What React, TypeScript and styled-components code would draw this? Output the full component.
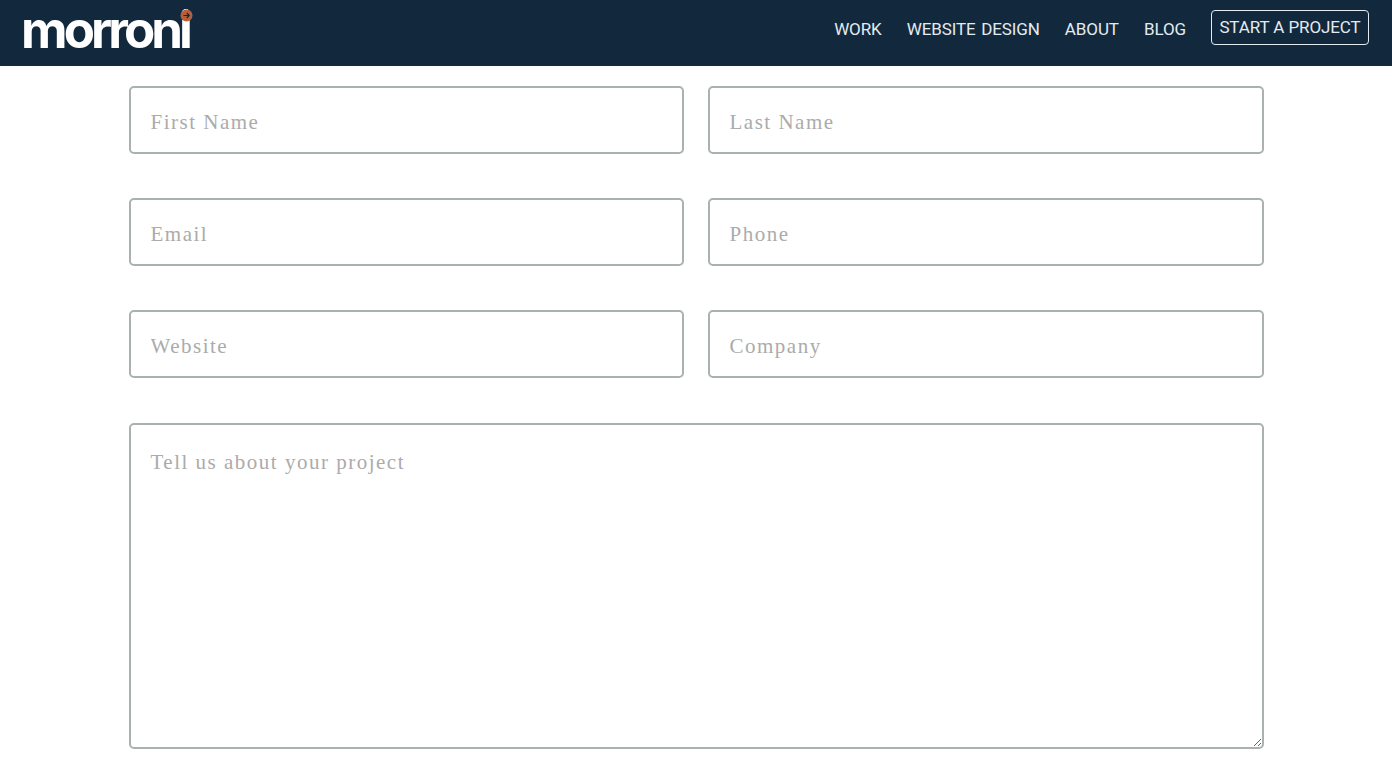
import React from 'react';
import styled, { createGlobalStyle } from 'styled-components';

const GlobalStyle = createGlobalStyle`
  html, body {
    margin: 0;
    padding: 0;
    height: 100%;
    overflow: hidden;
    background: #FFFFFF;
  }
  * {
    box-sizing: border-box;
  }
`;

const Header = styled.header`
  height: 66px;
  background: #12293D;
  display: flex;
  align-items: flex-start;
  justify-content: space-between;
  padding: 10px 23px 0 24px;
`;

const Logo = styled.div`
  position: relative;
  width: 168px;
  height: 40px;
  font-family: "Inter", sans-serif;
  font-weight: 700;
  font-size: 51px;
  line-height: 40px;
  letter-spacing: -3.9px;
  margin-left: -3px;
  color: #FFFFFF;
  white-space: nowrap;
`;

const LogoDot = styled.svg`
  position: absolute;
  top: -1px;
  right: -3.5px;
  width: 13px;
  height: 13px;
`;

const Nav = styled.nav`
  display: flex;
  align-items: flex-start;
  gap: 25px;
`;

const NavLink = styled.a`
  font-family: "Roboto", sans-serif;
  font-size: 17px;
  line-height: 20px;
  letter-spacing: -0.1px;
  word-spacing: 1.5px;
  color: #E4EBF0;
  margin-top: 9px;
  white-space: nowrap;
`;

const CtaButton = styled.a`
  width: 158px;
  height: 35px;
  border: 1px solid #E4EBF0;
  border-radius: 4px;
  font-family: "Roboto", sans-serif;
  font-size: 17px;
  line-height: 32px;
  letter-spacing: -0.1px;
  color: #E4EBF0;
  text-align: center;
  white-space: nowrap;
`;

const Form = styled.form`
  width: 1135px;
  margin: 20px 0 0 129px;
  display: grid;
  grid-template-columns: 555px 556px;
  column-gap: 24px;
  row-gap: 44px;
`;

const fieldStyles = `
  display: block;
  width: 100%;
  border: 2px solid #A9B2AE;
  border-radius: 5px;
  background: #FFFFFF;
  padding: 0 19.5px;
  font-family: "Liberation Serif", serif;
  font-size: 21px;
  letter-spacing: 1.5px;
  color: #333333;
  outline: none;
  &::placeholder {
    color: #ABABAB;
    opacity: 1;
  }
`;

const Input = styled.input`
  ${fieldStyles}
  height: 68px;
  padding-top: 5px;
`;

const TextArea = styled.textarea`
  ${fieldStyles}
  grid-column: 1 / -1;
  height: 326px;
  margin-top: 1px;
  padding-top: 25px;
`;

const fields = ['First Name', 'Last Name', 'Email', 'Phone', 'Website', 'Company'];
const links = ['WORK', 'WEBSITE DESIGN', 'ABOUT', 'BLOG'];

export default function App() {
  return (
    <>
      <GlobalStyle />
      <Header>
        <Logo>
          morroni
          <LogoDot viewBox="0 0 13 13">
            <circle cx="6.5" cy="6.5" r="6" fill="#B5603A" />
            <path d="M3.5 6.5h5.5M6.8 4l2.4 2.5L6.8 9" fill="none" stroke="#12293D" strokeWidth="1.2" />
          </LogoDot>
        </Logo>
        <Nav>
          {links.map(link => (
            <NavLink key={link}>{link}</NavLink>
          ))}
          <CtaButton>START A PROJECT</CtaButton>
        </Nav>
      </Header>
      <Form>
        {fields.map(field => (
          <Input key={field} placeholder={field} />
        ))}
        <TextArea placeholder="Tell us about your project" />
      </Form>
    </>
  );
}
